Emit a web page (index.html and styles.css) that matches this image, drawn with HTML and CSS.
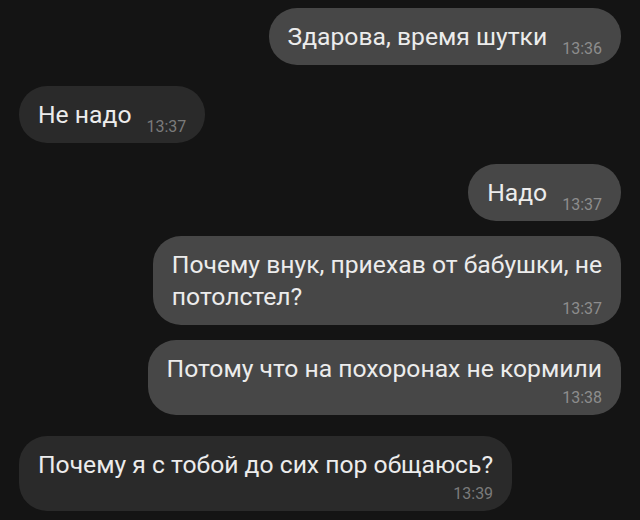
FILE: index.html
```html
<!DOCTYPE html>
<html>
<head>
  <title>Чат</title>
  <meta name="viewport" content="width=device-width, initial-scale=1.0">
  <link rel="stylesheet" href="styles.css">
</head>
<body>
  <div class="chat">
    <div class="msg out">
      <span class="text">Здарова, время шутки</span><span class="time">13:36</span>
    </div>
    <div class="msg in">
      <span class="text">Не надо</span><span class="time">13:37</span>
    </div>
    <div class="msg out">
      <span class="text">Надо</span><span class="time">13:37</span>
    </div>
    <div class="msg out">
      <span class="text">Почему внук, приехав от бабушки, не<br>потолстел?</span><span class="time">13:37</span>
    </div>
    <div class="msg out stacked">
      <span class="text">Потому что на похоронах не кормили</span><span class="time">13:38</span>
    </div>
    <div class="msg in stacked">
      <span class="text">Почему я с тобой до сих пор общаюсь?</span><span class="time">13:39</span>
    </div>
  </div>
</body>
</html>
```

FILE: styles.css
```css
body {
  margin: 0;
  background: #141414;
  font-family: Roboto, "Noto Sans", sans-serif;
}

.chat {
  display: flex;
  flex-direction: column;
  padding: 8px 19px;
}

.msg {
  padding: 13px 19px 12px 19px;
  border-radius: 28px;
  color: #ececec;
  font-size: 24.7px;
  line-height: 32px;
  margin-top: 15px;
}

.msg:first-child {
  margin-top: 0;
}

.out + .in,
.in + .out {
  margin-top: 21px;
}

.out {
  align-self: flex-end;
  background: #474747;
}

.in {
  align-self: flex-start;
  background: #2a2a2a;
}

.time {
  float: right;
  margin: 19px 0 -5px 15px;
  font-size: 16px;
  line-height: 18px;
  color: #8d8d8d;
}

.in .time {
  color: #7b7b7b;
}

.stacked {
  padding-bottom: 8px;
}

.stacked .time {
  float: none;
  display: block;
  text-align: right;
  margin: 4px 0 0 0;
}
```
